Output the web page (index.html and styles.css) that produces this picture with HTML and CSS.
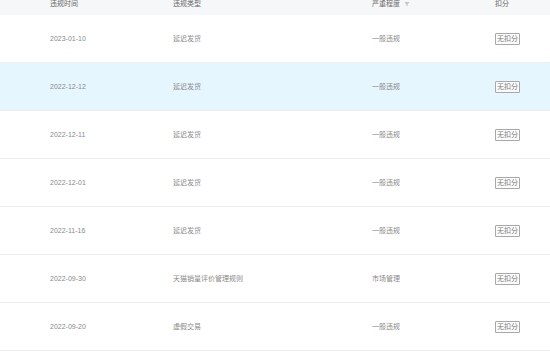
FILE: index.html
```html
<!DOCTYPE html>
<html lang="zh">
<head>
<meta charset="utf-8">
<link rel="stylesheet" href="styles.css">
</head>
<body>
<div class="table">
  <div class="row head">
    <div class="cell">违规时间</div>
    <div class="cell">违规类型</div>
    <div class="cell">严重程度 <svg class="filter" width="6" height="6" viewBox="0 0 6 6"><path d="M0.5 1h5L3.6 3.4V5.3L2.4 4.7V3.4z" fill="#c4c4c4"/></svg></div>
    <div class="cell">扣分</div>
  </div>
  <div class="row">
    <div class="cell">2023-01-10</div><div class="cell">延迟发货</div><div class="cell">一般违规</div><div class="cell"><span class="tag">无扣分</span></div>
  </div>
  <div class="row active">
    <div class="cell">2022-12-12</div><div class="cell">延迟发货</div><div class="cell">一般违规</div><div class="cell"><span class="tag">无扣分</span></div>
  </div>
  <div class="row">
    <div class="cell">2022-12-11</div><div class="cell">延迟发货</div><div class="cell">一般违规</div><div class="cell"><span class="tag">无扣分</span></div>
  </div>
  <div class="row">
    <div class="cell">2022-12-01</div><div class="cell">延迟发货</div><div class="cell">一般违规</div><div class="cell"><span class="tag">无扣分</span></div>
  </div>
  <div class="row">
    <div class="cell">2022-11-16</div><div class="cell">延迟发货</div><div class="cell">一般违规</div><div class="cell"><span class="tag">无扣分</span></div>
  </div>
  <div class="row">
    <div class="cell">2022-09-30</div><div class="cell">天猫销量评价管理规则</div><div class="cell">市场管理</div><div class="cell"><span class="tag">无扣分</span></div>
  </div>
  <div class="row">
    <div class="cell">2022-09-20</div><div class="cell">虚假交易</div><div class="cell">一般违规</div><div class="cell"><span class="tag">无扣分</span></div>
  </div>
</div>
</body>
</html>
```
FILE: styles.css
```css
html, body {
  margin: 0;
  padding: 0;
  background: #fff;
}
body {
  font-family: "Liberation Sans", "Noto Sans CJK SC", sans-serif;
  font-size: 7px;
  color: #8a8a8a;
}
.table {
  width: 550px;
}
.row {
  display: grid;
  grid-template-columns: 123px 199px 123px 1fr;
  padding-left: 50px;
  height: 47px;
  align-items: center;
  border-bottom: 1px solid #ededed;
}
.row.head {
  height: 15px;
  align-items: start;
  background: #f6f7f9;
  color: #6a6a6a;
  border-bottom: none;
}
.row.head .cell {
  line-height: 7px;
}
.row.active {
  background: #e6f6ff;
}
.cell {
  white-space: nowrap;
  line-height: 9px;
}
.filter {
  vertical-align: -0.5px;
  margin-left: 2px;
}
.tag {
  display: inline-block;
  border: 1px solid #a8a8a8;
  border-radius: 1px;
  padding: 1px 1px;
  color: #808080;
  line-height: 8px;
  background: #fbfbfb;
}
```
